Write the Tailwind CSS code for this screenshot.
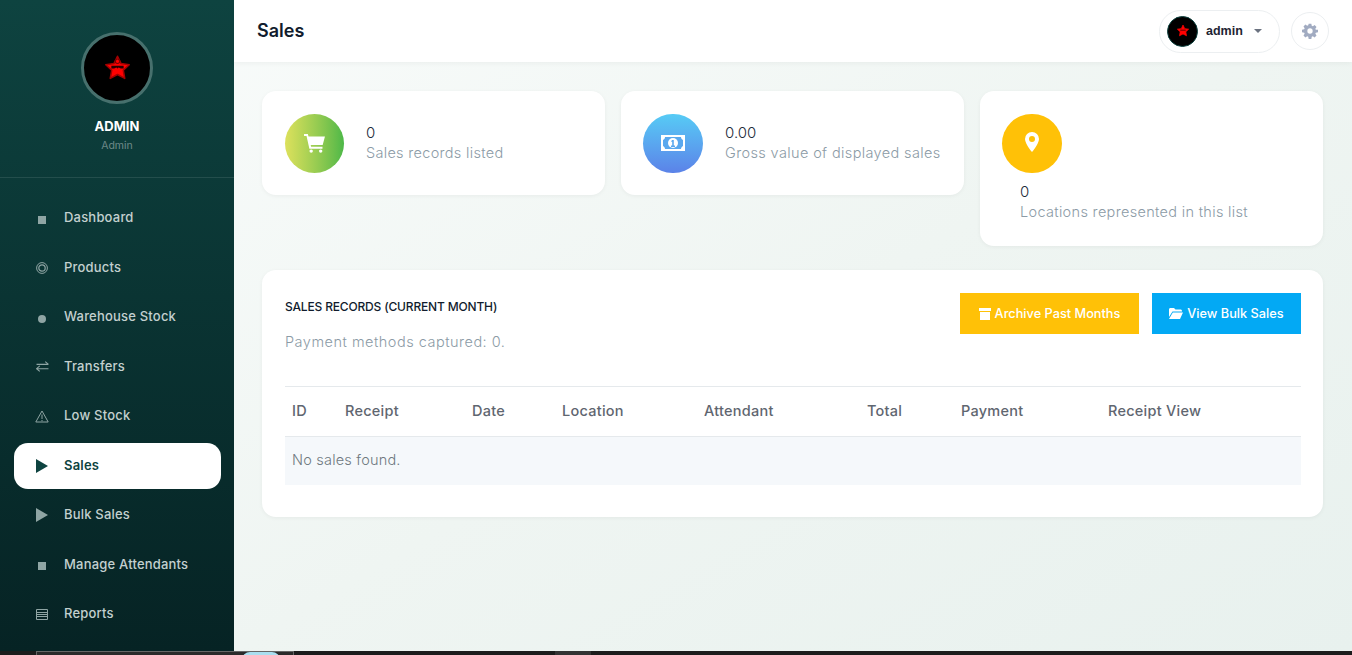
<!DOCTYPE html>
<html lang="en">
<head>
    <meta charset="UTF-8">
    <meta name="viewport" content="width=device-width, initial-scale=1.0">
    <title>Sales</title>
    <script src="https://cdn.jsdelivr.net/npm/@tailwindcss/browser@4"></script>
</head>
<body class="overflow-hidden font-['Inter',sans-serif]">
<div class="flex flex-col h-[655px] w-[1352px]">
    <div class="flex h-[651px]">
        <!-- Sidebar -->
        <aside class="w-[234px] shrink-0 bg-gradient-to-b from-[#0e4340] to-[#062324] flex flex-col">
            <div class="h-[178px] border-b border-white/10 flex flex-col items-center pt-[32px]">
                <div class="w-[72px] h-[72px] rounded-full bg-black border-[3px] border-[#47706d] flex items-center justify-center">
                    <svg viewBox="0 0 26 26" class="w-[29px] h-[29px]">
                        <path d="M13 2l3.200 6.600 7.300 1-5.300 5 1.300 7.300L13 18.400l-6.500 3.500 1.300-7.300-5.300-5 7.300-1z" fill="#f00" stroke="#a30000" stroke-width="1.400" stroke-linejoin="round"/>
                        <circle cx="13" cy="6.500" r="2" fill="none" stroke="#7a0000" stroke-width="1"/>
                        <path d="M7.500 10.500h11v2.500h-2.500l-2-1-1 1-1-1-2 1h-2.500z" fill="#2a0000"/>
                    </svg>
                </div>
                <div class="mt-[12px] text-[13px] leading-[20px] font-bold text-white">ADMIN</div>
                <div class="mt-[1px] text-[10.500px] leading-[18px] text-white/40">Admin</div>
            </div>
            <nav class="flex flex-col gap-[3.500px] pt-[17px] text-[13px] tracking-[0.2px] font-medium text-[#c3d0cf]">
                <a class="h-[46px] ml-[14px] mr-[13px] pl-[16px] flex items-center gap-[10px] rounded-[14px]">
                    <span class="w-[24px] flex justify-center"><span class="w-[8px] h-[8px] mt-[3px] bg-[#8fa5a4]"></span></span>Dashboard</a>
                <a class="h-[46px] ml-[14px] mr-[13px] pl-[16px] flex items-center gap-[10px] rounded-[14px]">
                    <span class="w-[24px] flex justify-center"><svg viewBox="0 0 12 12" class="w-[12px] h-[12px]" fill="none" stroke="#8fa5a4"><circle cx="6" cy="6" r="5.400"/><circle cx="6" cy="6" r="3.200" stroke-width="1.200"/></svg></span>Products</a>
                <a class="h-[46px] ml-[14px] mr-[13px] pl-[16px] flex items-center gap-[10px] rounded-[14px]">
                    <span class="w-[24px] flex justify-center"><span class="w-[8px] h-[8px] mt-[3px] rounded-full bg-[#8fa5a4]"></span></span>Warehouse Stock</a>
                <a class="h-[46px] ml-[14px] mr-[13px] pl-[16px] flex items-center gap-[10px] rounded-[14px]">
                    <span class="w-[24px] flex justify-center"><svg viewBox="0 0 12 12" class="w-[13px] h-[13px]" fill="none" stroke="#8fa5a4"><path d="M.5 4h11M8.500 1.500 11.500 4M11.500 8H.5M3.500 5.500.5 8 3.500 10.500"/></svg></span>Transfers</a>
                <a class="h-[46px] ml-[14px] mr-[13px] pl-[16px] flex items-center gap-[10px] rounded-[14px]">
                    <span class="w-[24px] flex justify-center"><svg viewBox="0 0 14 13" class="w-[14px] h-[13px]" fill="none" stroke="#8fa5a4"><path d="M7 1 .8 12h12.400zM7 4.500V9M7 10v1.200"/></svg></span>Low Stock</a>
                <a class="h-[46px] ml-[14px] mr-[13px] pl-[16px] flex items-center gap-[10px] rounded-[14px] bg-white text-[#0e4340] font-semibold">
                    <span class="w-[24px] flex justify-center"><svg viewBox="0 0 12 14" class="w-[12px] h-[14px]" fill="#0e4340"><path d="M0 0l12 7-12 7z"/></svg></span>Sales</a>
                <a class="h-[46px] ml-[14px] mr-[13px] pl-[16px] flex items-center gap-[10px] rounded-[14px]">
                    <span class="w-[24px] flex justify-center"><svg viewBox="0 0 12 14" class="w-[12px] h-[14px]" fill="#8fa5a4"><path d="M0 0l12 7-12 7z"/></svg></span>Bulk Sales</a>
                <a class="h-[46px] ml-[14px] mr-[13px] pl-[16px] flex items-center gap-[10px] rounded-[14px]">
                    <span class="w-[24px] flex justify-center"><span class="w-[8px] h-[8px] mt-[3px] bg-[#8fa5a4]"></span></span>Manage Attendants</a>
                <a class="h-[46px] ml-[14px] mr-[13px] pl-[16px] flex items-center gap-[10px] rounded-[14px]">
                    <span class="w-[24px] flex justify-center"><svg viewBox="0 0 12 11" class="w-[12px] h-[11px]" fill="none" stroke="#8fa5a4"><path d="M.5.5h11v10H.5zM.5 3.500h11M.5 5.500h11M.5 7.500h11"/></svg></span>Reports</a>
            </nav>
        </aside>

        <div class="flex-1 min-w-0 flex flex-col bg-gradient-to-br from-[#f8fbfa] via-[#eff5f2] to-[#e8f1ee]">
            <!-- Top bar -->
            <header class="h-[62px] bg-white shadow-[0_1px_6px_rgba(0,0,0,0.05)] flex items-center pl-[23px] pr-[23px]">
                <h1 class="text-[18px] font-semibold text-[#111c2d] -mt-[1px]">Sales</h1>
                <div class="ml-auto flex items-center gap-[11px]">
                    <div class="h-[43px] w-[121px] rounded-full border border-[#eceff1] bg-white flex items-center pl-[7px]">
                        <div class="w-[31px] h-[31px] rounded-full bg-black border border-[#0e4340] flex items-center justify-center">
                            <svg viewBox="0 0 26 26" class="w-[14px] h-[14px]"><path d="M13 2l3.200 6.600 7.300 1-5.300 5 1.300 7.300L13 18.400l-6.500 3.500 1.300-7.300-5.300-5 7.300-1z" fill="#f00" stroke="#f00" stroke-width="1.400" stroke-linejoin="round"/><path d="M8 10.500h10v2H8z" fill="#600"/></svg>
                        </div>
                        <span class="ml-[8px] text-[12.500px] font-bold text-[#1e2433] font-['Liberation_Sans',sans-serif]">admin</span>
                        <span class="ml-[11px] w-0 h-0 border-x-[4.500px] border-x-transparent border-t-[4px] border-t-[#6b7280]"></span>
                    </div>
                    <div class="w-[38px] h-[38px] rounded-full border border-[#eceff1] bg-white flex items-center justify-center">
                        <svg viewBox="0 0 24 24" class="w-[16px] h-[16px]" fill="#a1abc1"><path fill-rule="evenodd" d="M10 1h4l.6 3.100 1.700.7 2.600-1.800 2.900 2.900-1.800 2.600.7 1.700L24 10v4l-3.300.6-.7 1.700 1.800 2.600-2.900 2.900-2.600-1.800-1.700.7L14 24h-4l-.6-3.300-1.700-.7-2.600 1.800-2.900-2.900 1.800-2.600-.7-1.700L0 14v-4l3.300-.6.7-1.700L2.200 5.100 5.100 2.200l2.600 1.800 1.700-.7zM12 8a4 4 0 1 0 0 8 4 4 0 0 0 0-8z"/></svg>
                    </div>
                </div>
            </header>

            <!-- Content -->
            <main class="pt-[29px] pl-[28px] pr-[29px]">
                <div class="flex items-start gap-[16px]">
                    <div class="w-[343px] h-[104px] bg-white rounded-[14px] shadow-[0_1px_4px_rgba(0,0,0,0.05)] flex items-center pl-[23px]">
                        <div class="w-[59px] h-[59px] rounded-full bg-gradient-to-r from-[#dde15c] to-[#4cb848] flex items-center justify-center">
                            <svg viewBox="0 0 22 20" class="w-[21px] h-[19px]" fill="#fff"><path d="M0 0h4l.7 2.500H22l-2.400 9H7l.4 2h12v2H5.600L2.600 2H0z"/><circle cx="7.500" cy="18" r="1.800"/><circle cx="17.500" cy="18" r="1.800"/></svg>
                        </div>
                        <div class="ml-[22px] pb-[2px]">
                            <div class="text-[15px] leading-[20px] font-light text-[#1d2b3a]">0</div>
                            <div class="text-[14.500px] tracking-[0.3px] font-light leading-[19px] text-[#8c9ba6]">Sales records listed</div>
                        </div>
                    </div>
                    <div class="w-[343px] h-[104px] bg-white rounded-[14px] shadow-[0_1px_4px_rgba(0,0,0,0.05)] flex items-center pl-[22px]">
                        <div class="w-[60px] h-[59px] rounded-full bg-gradient-to-b from-[#56cbf5] to-[#5b82e8] flex items-center justify-center">
                            <svg viewBox="0 0 24 16" class="w-[24px] h-[16px]"><path fill="#fff" d="M0 0h24v16H0z"/><path fill="#5aa8ee" d="M4 2h16c0 1.500 1 2.500 2 3v6c-1 .5-2 1.500-2 3H4c0-1.500-1-2.500-2-3V5c1-.5 2-1.500 2-3z"/><circle cx="12" cy="8" r="5" fill="#fff"/><path fill="#5aa8ee" d="M11 5h1.800v5.500H14V12h-4v-1.500h1.200V6.800H10z"/></svg>
                        </div>
                        <div class="ml-[22px] pb-[2px]">
                            <div class="text-[15px] leading-[20px] font-light text-[#1d2b3a]">0.00</div>
                            <div class="text-[14.500px] tracking-[0.37px] font-light leading-[19px] text-[#8c9ba6]">Gross value of displayed sales</div>
                        </div>
                    </div>
                    <div class="w-[343px] h-[155px] bg-white rounded-[14px] shadow-[0_1px_4px_rgba(0,0,0,0.05)] pl-[22px] pt-[23px]">
                        <div class="w-[60px] h-[59px] rounded-full bg-[#ffc107] flex items-center justify-center">
                            <svg viewBox="0 0 14 20" class="w-[14px] h-[20px] -mt-[3px]"><path fill="#fff" fill-rule="evenodd" d="M7 0a7 7 0 0 1 7 7c0 3-3.500 9-7 13C3.500 16 0 10 0 7a7 7 0 0 1 7-7zm0 4a3 3 0 1 0 0 6 3 3 0 0 0 0-6z"/></svg>
                        </div>
                        <div class="ml-[18px] mt-[9px] text-[15px] leading-[20px] font-light text-[#1d2b3a]">0</div>
                        <div class="ml-[18px] text-[14.500px] tracking-[0.32px] font-light leading-[20px] text-[#8c9ba6]">Locations represented in this list</div>
                    </div>
                </div>

                <section class="mt-[24px] h-[247px] bg-white rounded-[14px] shadow-[0_1px_4px_rgba(0,0,0,0.05)] pt-[23px] pl-[23px] pr-[22px]">
                    <div class="flex justify-between h-[93px]">
                        <div>
                            <h2 class="mt-[4px] text-[12px] tracking-[-0.17px] leading-[20px] font-medium text-[#111c2d]">SALES RECORDS (CURRENT MONTH)</h2>
                            <p class="mt-[15px] text-[14.500px] tracking-[0.5px] font-light leading-[20px] text-[#8c9ba6]">Payment methods captured: 0.</p>
                        </div>
                        <div class="flex gap-[13px] items-start text-[12.750px] font-medium text-white">
                            <a class="h-[41px] w-[179px] bg-[#ffc107] flex items-center justify-center gap-[4px]">
                                <svg viewBox="0 0 12 12" class="w-[12px] h-[12px]" fill="#fff"><path d="M0 0h12v3H0zM1 4h10v8H1z"/></svg>Archive Past Months</a>
                            <a class="h-[41px] w-[149px] bg-[#03a9f4] flex items-center justify-center gap-[4px]">
                                <svg viewBox="0 0 14 11" class="w-[14px] h-[11px]" fill="#fff"><path d="M0 1.500C0 .7.600 0 1.500 0H5l1.500 1.500h5c.8 0 1.500.7 1.500 1.500v.5H3.500L0 9zM3.800 4.500H14l-3 6.500H0z"/></svg>View Bulk Sales</a>
                        </div>
                    </div>
                    <table class="w-[1016px] table-fixed text-left border-collapse">
                        <thead>
                            <tr class="h-[50px] border-y border-[#e5e9ec] text-[14.500px] tracking-[0.25px] text-[#5f6670]">
                                <th class="w-[52px] pl-[7px] pb-[2px] font-medium">ID</th>
                                <th class="w-[135px] pl-[8px] pb-[2px] font-medium">Receipt</th>
                                <th class="w-[90px] pb-[2px] font-medium">Date</th>
                                <th class="w-[142px] pb-[2px] font-medium">Location</th>
                                <th class="w-[163px] pb-[2px] font-medium">Attendant</th>
                                <th class="w-[94px] pb-[2px] font-medium">Total</th>
                                <th class="w-[147px] pb-[2px] font-medium">Payment</th>
                                <th class="pb-[2px] font-medium">Receipt View</th>
                            </tr>
                        </thead>
                        <tbody>
                            <tr class="h-[48px] bg-[#f5f8fb]">
                                <td colspan="8" class="pl-[7px] pb-[2px] text-[14.500px] tracking-[0.2px] font-light text-[#6f7880]">No sales found.</td>
                            </tr>
                        </tbody>
                    </table>
                </section>
            </main>
        </div>
    </div>
    <!-- Strip at the bottom of the window -->
    <div class="h-[4px] bg-[#1c1c1c] flex overflow-hidden">
        <div class="ml-[36px] w-[258px] h-[4px] bg-[#2a2a2a] border-t border-x border-[#666] flex justify-end pr-[13px]">
            <span class="w-[38px] h-[16px] shrink-0 rounded-full bg-[#a9dff0]"></span>
        </div>
        <div class="ml-[261px] w-[36px] h-[4px] bg-[#333]"></div>
    </div>
</div>
</body>
</html>
